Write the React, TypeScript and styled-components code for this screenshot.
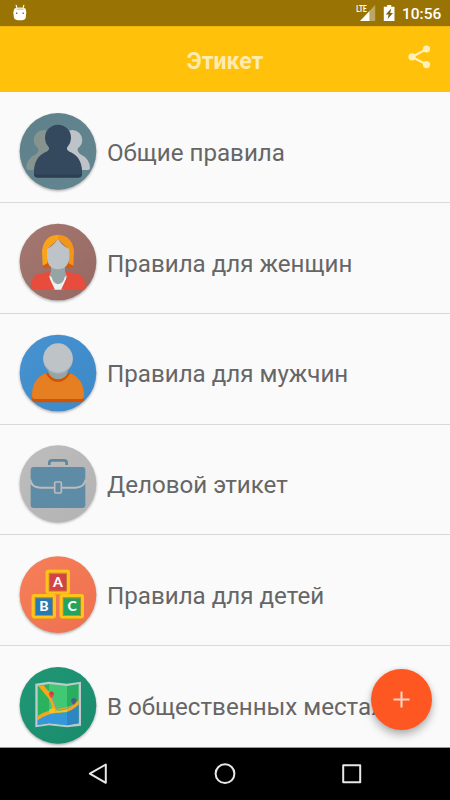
import React from 'react';
import styled, { createGlobalStyle } from 'styled-components';

const GlobalStyle = createGlobalStyle`
  * { box-sizing: border-box; }
  body { margin: 0; font-family: Roboto, "Noto Sans", sans-serif; overflow: hidden; }
`;

const Screen = styled.div`
  position: relative;
  width: 450px;
  height: 800px;
  display: flex;
  flex-direction: column;
  background: #fafafa;
  overflow: hidden;
`;

const StatusBar = styled.div`
  flex: none;
  height: 26px;
  padding: 0 9px 0 12px;
  display: flex;
  align-items: center;
  background: #997304;
  color: #fff;
`;

const Signals = styled.div`
  margin-left: auto;
  display: flex;
  align-items: center;
`;

const SignalIcon = styled.svg`
  width: 20px;
  height: 18px;
  margin-right: 7px;
`;

const Clock = styled.span`
  width: 39px;
  margin-left: 7px;
  font-size: 15.5px;
  font-weight: 500;
  line-height: 26px;
  padding-top: 2px;
  white-space: nowrap;
`;

const AppBar = styled.header`
  flex: none;
  height: 66px;
  display: grid;
  grid-template-columns: 60px 1fr 60px;
  align-items: center;
  background: #ffc10a;
  border-top: 1px solid #f4b50a;
`;

const Title = styled.h1`
  grid-column: 2;
  margin: 0;
  padding-top: 5px;
  text-align: center;
  font-size: 23px;
  line-height: 28px;
  font-weight: 700;
  color: #ffebae;
`;

const ShareButton = styled.button`
  display: flex;
  justify-content: center;
  padding: 0 2px 5px 0;
  border: 0;
  background: none;
`;

const List = styled.main`
  flex: 1;
  min-height: 0;
  overflow: hidden;
`;

const Row = styled.div<{ $height: number; $top: number }>`
  height: ${(p) => p.$height}px;
  padding: ${(p) => p.$top}px 0 0 10px;
  display: flex;
  align-items: flex-start;
  border-bottom: 1px solid #d9d9d9;
`;

const Avatar = styled.svg`
  flex: none;
  width: 96px;
  height: 96px;
`;

const Label = styled.span<{ $line: number }>`
  padding-left: 1px;
  font-size: 24.15px;
  line-height: ${(p) => p.$line}px;
  color: #666;
  white-space: nowrap;
`;

const Fab = styled.button`
  position: absolute;
  right: 18px;
  bottom: 70px;
  width: 61px;
  height: 61px;
  border: 0;
  border-radius: 50%;
  display: flex;
  align-items: center;
  justify-content: center;
  padding: 0;
  background: #ff5722;
  box-shadow: 0 5px 9px rgba(0, 0, 0, 0.28), 0 0 4px rgba(0, 0, 0, 0.1);
`;

const NavBar = styled.nav`
  flex: none;
  height: 53px;
  border-top: 1px solid #999;
  padding: 0 35px 0 34px;
  display: grid;
  grid-template-columns: repeat(3, 1fr);
  align-items: center;
  justify-items: center;
  background: #000;
`;

const NavIcon = styled.svg`
  width: 24px;
  height: 24px;
  fill: none;
  stroke: #e8e8e8;
  stroke-width: 2;
  stroke-linejoin: round;
`;

const People = () => (
  <>
    <g fill="#87938f">
      <circle cx="101" cy="108" r="30" />
      <path d="M83 130 Q89 140 79 149 Q49 164 49 192 Q49 198 55 198 H130 V125Z" />
    </g>
    <g fill="#bdc3c7">
      <circle cx="187" cy="108" r="30" />
      <path d="M205 130 Q199 140 209 149 Q240 164 240 192 Q240 198 234 198 H160 V125Z" />
    </g>
    <path d="M113 124 Q123 136 112 144 Q72 159 72 211 Q72 221 82 221 H206 Q216 221 216 211 Q216 159 176 144 Q165 136 175 124Z" fill="#2c3e50" />
    <path d="M113 120 Q123 134 112 142 Q72 157 72 205 Q72 212 82 212 H206 Q216 212 216 205 Q216 157 176 142 Q165 134 175 120Z" fill="#34495e" />
    <circle cx="144" cy="101" r="39" fill="#34495e" />
  </>
);

const Woman = () => (
  <>
    <path d="M98 155 L124 140 V162 H107 Q99 161 98 155Z M190 155 L164 140 V162 H181 Q189 161 190 155Z" fill="#d95b06" />
    <path d="M144 62 Q101 64 96 111 L98 155 L112 148 V105 L144 76Z" fill="#f9a31b" />
    <path d="M144 62 Q187 64 192 111 L190 155 L176 148 V105 L144 76Z" fill="#f39519" />
    <path d="M123 154 H165 V172 L176 182 L144 220 L112 182 L123 172Z" fill="#95a5a6" />
    <path d="M117 184 L125 190 Q129 209 144 211 Q160 209 164 190 L171 184 L160 227 H128Z" fill="#ecf0f1" />
    <path d="M123 171 Q117 174 84 180 Q63 187 62 220 Q62 227 69 227 H135 L117 190Z M165 171 Q171 174 204 180 Q225 187 227 220 Q227 227 220 227 H153 L171 190Z" fill="#e74c3c" />
    <path d="M144 75 Q129 97 111 105 V130 Q112 165 144 166 Q176 165 178 130 V105 Q157 97 144 75Z" fill="#bdc3c7" />
  </>
);

const Man = () => (
  <>
    <path d="M111 143 Q66 162 66 220 Q66 232 77 232 H211 Q222 232 222 220 Q222 162 177 143Z" fill="#d35400" />
    <path d="M107 145 Q66 162 66 212 Q66 222 76 222 H212 Q222 222 222 212 Q222 162 181 145 Q166 171 144 171 Q121 171 107 145Z" fill="#e67e22" />
    <path d="M114 139 H175 Q168 162 144 163 Q121 162 114 139Z" fill="#95a5a6" />
    <circle cx="144" cy="103" r="44.5" fill="#a4afb4" />
    <circle cx="144" cy="99" r="44" fill="#bdc3c7" />
  </>
);

const Briefcase = () => (
  <>
    <path d="M118 87 V81 Q118 73 126 73 H162 Q170 73 170 81 V87" fill="none" stroke="#5e879e" strokeWidth="8" />
    <rect x="62" y="93" width="164" height="123" rx="9" fill="#5e8ba5" />
    <path d="M61 131 Q63 154 91 155 H197 Q224 153 227 131" fill="none" stroke="#bcbcbc" strokeWidth="6" />
    <rect x="134" y="138" width="20" height="33" rx="3" fill="#5e8ba5" stroke="#bcbcbc" strokeWidth="5" />
  </>
);

interface BlockProps { x: number; y: number; fill: string; letter: string }

const Block = ({ x, y, fill, letter }: BlockProps) => (
  <>
    <rect x={x} y={y} width="73" height="75" rx="8" fill="#efa51b" />
    <rect x={x} y={y} width="73" height="72" rx="8" fill="#ffc31c" />
    <rect x={x + 9} y={y + 9} width="55" height="57" fill="#c78d28" />
    <rect x={x + 12} y={y + 13} width="50" height="50" fill={fill} />
    <text x={x + 37} y={y + 52} fill="#fff" fontFamily="Lato, sans-serif" fontSize="42" fontWeight="900" textAnchor="middle">{letter}</text>
  </>
);

const Blocks = () => (
  <>
    <Block x={107} y={68} fill="#d54245" letter="A" />
    <Block x={65} y={141} fill="#2779b4" letter="B" />
    <Block x={149} y={141} fill="#22a45d" letter="C" />
  </>
);

const MapPicture = () => (
  <>
    <path d="M76 77 L117 71 L171 77 L213 71 V203 L171 208 L117 202 L76 208Z" fill="#bdc9cc" />
    <path d="M83 84 L117 78 V196 L83 201Z" fill="#29b35f" />
    <path d="M117 78 L171 84 V202 L117 196Z" fill="#40c873" />
    <path d="M171 84 L206 78 V196 L171 202Z" fill="#27ae60" />
    <path d="M83 185 Q105 164 137 166 L171 163 V202 L117 196 L83 201Z" fill="#3498db" />
    <path d="M171 163 Q187 155 206 138 V196 L171 202Z" fill="#2d85c3" />
    <path d="M85 84 L101 82 Q112 97 121 104 L141 152 Q182 152 206 127 V140 Q183 161 162 163 Q118 162 83 187 V174 Q101 162 125 155 Q127 131 109 113Z" fill="#f6a51d" />
    <path d="M118 154 L132 151 L138 164 L118 166Z M137 154 Q154 158 171 150 V161 L140 164Z" fill="#f5c51e" />
    <path d="M125 116 L141 156 Q169 158 190 139" fill="none" stroke="#71a493" strokeWidth="3.5" />
    <path d="M124 121 Q115 111 117 105 A8 8 0 0 1 132 105 Q134 111 124 121Z" fill="#d94b43" />
    <circle cx="125" cy="106" r="3" fill="#a43a38" />
    <path d="M191 141 Q181 131 184 125 A8 8 0 0 1 199 125 Q201 131 191 141Z" fill="#4b5f8c" />
    <circle cx="191" cy="127" r="3" fill="#26775e" />
  </>
);

interface Item {
  label: string;
  height: number;
  top: number;
  line: number;
  from: string;
  to: string;
  cy: number;
  Art: React.ComponentType;
}

const items: Item[] = [
  { label: 'Общие правила', height: 111, top: 12, line: 99, from: '#5e818b', to: '#638590', cy: 142, Art: People },
  { label: 'Правила для женщин', height: 111, top: 11, line: 101, from: '#a47871', to: '#966861', cy: 144, Art: Woman },
  { label: 'Правила для мужчин', height: 111, top: 11, line: 99, from: '#4793d2', to: '#3d89c7', cy: 144, Art: Man },
  { label: 'Деловой этикет', height: 110, top: 11, line: 99, from: '#bdbdbd', to: '#b3b3b3', cy: 143, Art: Briefcase },
  { label: 'Правила для детей', height: 111, top: 12, line: 99, from: '#f77f5a', to: '#ee704e', cy: 143, Art: Blocks },
  { label: 'В общественных местах', height: 111, top: 12, line: 99, from: '#219776', to: '#188b6b', cy: 142, Art: MapPicture },
];

const CategoryRow = ({ label, height, top, line, from, to, cy, Art }: Item) => {
  const id = React.useId();
  return (
    <Row $height={height} $top={top}>
      <Avatar viewBox="0 0 288 288">
        <defs>
          <linearGradient id={`${id}g`} x1="0" y1="0" x2="1" y2="1">
            <stop stopColor={from} />
            <stop offset="1" stopColor={to} />
          </linearGradient>
          <filter id={`${id}s`} x="-20%" y="-20%" width="140%" height="140%">
            <feGaussianBlur stdDeviation="4" />
          </filter>
        </defs>
        <circle cx="144" cy={cy + 4} r="114" fill="#000" opacity=".38" filter={`url(#${id}s)`} />
        <circle cx="144" cy={cy} r="115" fill={`url(#${id}g)`} />
        <Art />
      </Avatar>
      <Label $line={line}>{label}</Label>
    </Row>
  );
};

export default function App() {
  return (
    <Screen>
      <GlobalStyle />
      <StatusBar>
        <svg width="16" height="18" viewBox="0 0 16 18">
          <path d="M4 1 L5 4 M12 1 L11 4" stroke="#fff" strokeWidth="1.1" />
          <path d="M2.5 4.5 Q8 2.5 13.5 4.5 L14.3 8 L13.7 14 Q13 16.3 8 16.3 Q3 16.3 2 14 L1.3 8Z" fill="#fff" />
          <path d="M3.5 5 Q8 3.7 12.5 5 L11 6 H5Z" fill="#ddd2a9" />
          <path d="M4 9.2 H5.3 M10.5 9.2 H11.8" stroke="#7c6725" strokeWidth="1.4" />
        </svg>
        <Signals>
          <SignalIcon viewBox="0 0 20 18">
            <path d="M19.2 1 V17 H13.3 V7Z" fill="#bba75f" />
            <path d="M13.5 7 V17 H4Z" fill="#fff" />
            <text x="0.2" y="8.3" fill="#fff" fontFamily="Roboto, sans-serif" fontSize="9.5" fontWeight="700" textLength="10.4" lengthAdjust="spacingAndGlyphs">LTE</text>
          </SignalIcon>
          <svg width="12" height="18" viewBox="0 0 12 18">
            <path d="M4.2 1 H8.2 V2.7 H11.5 V17 H.8 V2.7 H4.2Z" fill="#fff" />
            <path d="M8.3 4.5 L2.7 10.5 H5.6 L4.7 15 L10 9 H7.2Z" fill="#806009" />
          </svg>
          <Clock>10:56</Clock>
        </Signals>
      </StatusBar>
      <AppBar>
        <Title>Этикет</Title>
        <ShareButton aria-label="Поделиться">
          <svg width="24" height="26" viewBox="0 0 24 26">
            <path d="M19.5 5 L5 13 L19.5 20.5" fill="none" stroke="#ffefb9" strokeWidth="2.1" />
            <g fill="#ffefb9">
              <circle cx="19.5" cy="5" r="3.6" />
              <circle cx="5" cy="12.8" r="3.6" />
              <circle cx="19.5" cy="20.6" r="3.6" />
            </g>
          </svg>
        </ShareButton>
      </AppBar>
      <List>
        {items.map((item) => (
          <CategoryRow key={item.label} {...item} />
        ))}
      </List>
      <Fab aria-label="Добавить">
        <svg width="17" height="17" viewBox="0 0 17 17">
          <path d="M8.5 .5 V16.5 M.5 8.5 H16.5" stroke="#ffd2c3" strokeWidth="2.1" />
        </svg>
      </Fab>
      <NavBar>
        <NavIcon viewBox="0 0 24 24"><path d="M19.8 2.5 V20.8 L3.8 11.7Z" /></NavIcon>
        <NavIcon viewBox="0 0 24 24"><circle cx="12" cy="11.7" r="9.4" /></NavIcon>
        <NavIcon viewBox="0 0 24 24"><rect x="3.2" y="3.3" width="17" height="17" /></NavIcon>
      </NavBar>
    </Screen>
  );
}
